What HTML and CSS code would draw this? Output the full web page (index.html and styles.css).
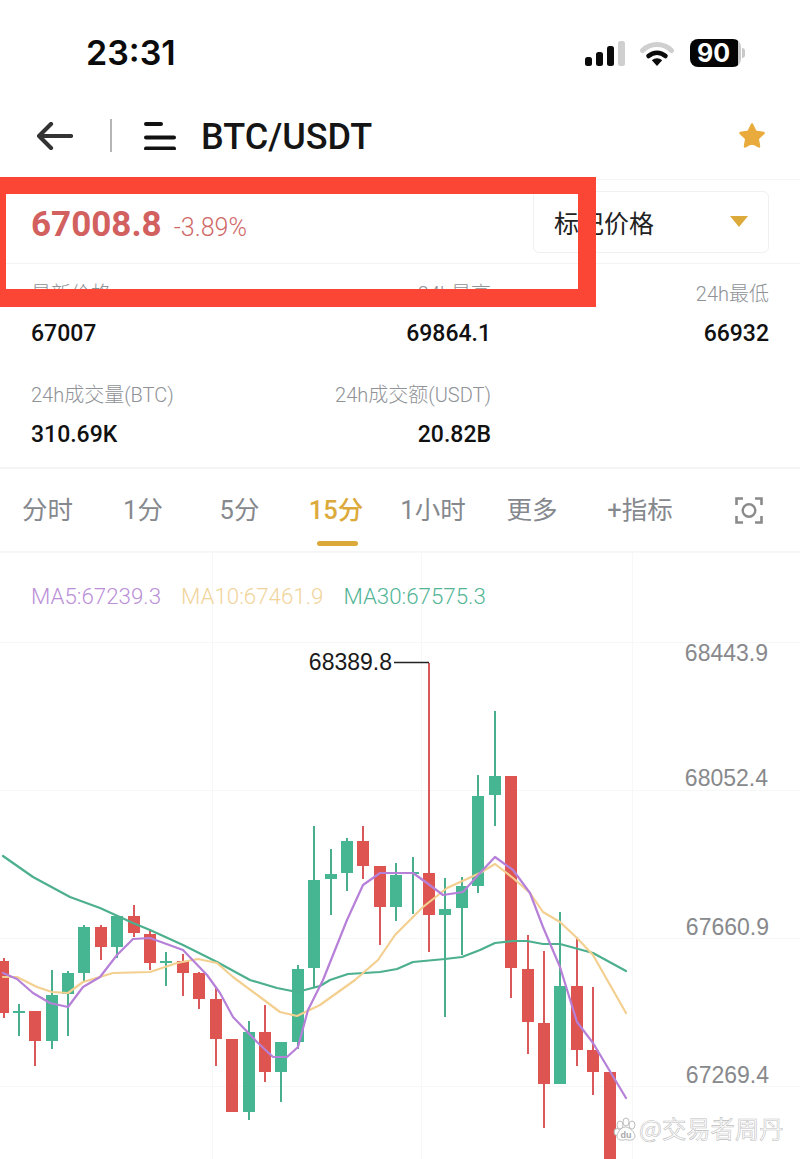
FILE: index.html
```html
<!DOCTYPE html>
<html lang="zh-CN">
<head>
<meta charset="utf-8">
<title>BTC/USDT</title>
<link rel="stylesheet" href="styles.css">
</head>
<body>
<main class="page">
  <div class="status">
    <span class="clock">23:31</span>
    <div class="status-icons">
      <svg class="signal" viewBox="0 0 40 25" width="40" height="25">
        <rect x="0" y="16" width="7" height="9" rx="2.5" fill="#0b0b0b"/>
        <rect x="11" y="11" width="7" height="14" rx="2.5" fill="#0b0b0b"/>
        <rect x="22" y="5" width="7" height="20" rx="2.5" fill="#0b0b0b"/>
        <rect x="33" y="0" width="7" height="25" rx="2.5" fill="#cfcfcf"/>
      </svg>
      <svg class="wifi" viewBox="0 0 34 26" width="34" height="26">
        <path d="M2.5 10.5C10.5 2.6 23.5 2.6 31.5 10.5" fill="none" stroke="#cfcfcf" stroke-width="5" stroke-linecap="round"/>
        <path d="M8.5 16C13.5 11.5 20.5 11.5 25.5 16" fill="none" stroke="#0b0b0b" stroke-width="4.5" stroke-linecap="round"/>
        <path d="M11.8 20.3C15 17.6 19 17.6 22.2 20.3L17 26Z" fill="#0b0b0b"/>
      </svg>
      <div class="battery">
        <span class="battery-level">90</span>
        <span class="battery-tip"></span>
      </div>
    </div>
  </div>

  <header class="topbar">
    <svg class="back" viewBox="0 0 36 28" width="36" height="28">
      <path d="M14 2L2 14L14 26M2 14H34" fill="none" stroke="#333" stroke-width="4.2" stroke-linecap="round" stroke-linejoin="round"/>
    </svg>
    <span class="topbar-rule"></span>
    <svg class="menu" viewBox="0 0 32 28" width="32" height="28">
      <path d="M2 2H17M2 15.500H30M2 26.500H30" fill="none" stroke="#111" stroke-width="4" stroke-linecap="round"/>
    </svg>
    <h1 class="pair">BTC/USDT</h1>
    <svg class="star" viewBox="0 0 28 28" width="28" height="28">
      <path d="M14 2.500L17.500 9.800L25.500 11L19.700 16.500L21 24.500L14 20.700L7 24.500L8.300 16.500L2.500 11L10.500 9.800Z" fill="#e8ab3c" stroke="#e8ab3c" stroke-width="2.500" stroke-linejoin="round"/>
    </svg>
  </header>

  <section class="price-row">
    <div class="price-main">
      <span class="price">67008.8</span>
      <span class="change">-3.89%</span>
    </div>
    <div class="picker">
      <span>标记价格</span>
      <span class="picker-arrow"></span>
    </div>
  </section>

  <section class="stats">
    <div class="stat">
      <div class="stat-label">最新价格</div>
      <div class="stat-value">67007</div>
    </div>
    <div class="stat stat-right">
      <div class="stat-label">24h最高</div>
      <div class="stat-value">69864.1</div>
    </div>
    <div class="stat stat-right">
      <div class="stat-label">24h最低</div>
      <div class="stat-value">66932</div>
    </div>
    <div class="stat">
      <div class="stat-label">24h成交量(BTC)</div>
      <div class="stat-value">310.69K</div>
    </div>
    <div class="stat stat-right">
      <div class="stat-label">24h成交额(USDT)</div>
      <div class="stat-value">20.82B</div>
    </div>
  </section>

  <nav class="tabs">
    <span class="tab">分时</span>
    <span class="tab">1分</span>
    <span class="tab">5分</span>
    <span class="tab tab-active">15分</span>
    <span class="tab">1小时</span>
    <span class="tab">更多</span>
    <span class="tab">+指标</span>
    <span class="tab">
      <svg viewBox="0 0 28 27" width="28" height="27">
        <path d="M1.500 8V1.500H8M20 1.500H26.500V8M1.500 19V25.500H8M20 25.500H26.500V19" fill="none" stroke="#8a8a8a" stroke-width="2.600"/>
        <circle cx="14" cy="13.500" r="6.300" fill="none" stroke="#8a8a8a" stroke-width="2.400"/>
      </svg>
    </span>
  </nav>

  <section class="chart">
    <svg class="chart-canvas" viewBox="0 552 800 607" width="800" height="607">
      <path class="grid-line" d="M0 552.500H800M0 642.500H800M0 790.500H800M0 938.500H800M0 1086.500H800M212.500 552V1159M421.500 552V1159M632.500 552V1159"/>

      <path class="wick wick-green" d="M19 1004V1036M52 970V1049M68 971V1036M84 925V982M117 915V958M166 952V986M249 1021V1120M281 1042V1102M298 965V1049M314 826V987M331 849V915M347 838V891M396 863V921M413 857V914M445 878V1017M462 877V955M478 775V893M495 711V826M560 912V1084"/>
      <path class="body-green" d="M13 1011h12v2h-12zM46 995h12v46h-12zM62 973h12v21h-12zM78 927h12v46h-12zM111 916h12v31h-12zM160 961h12v2h-12zM243 1032h12v80h-12zM275 1042h12v30h-12zM292 969h12v73h-12zM308 880h12v88h-12zM325 874h12v5h-12zM341 841h12v32h-12zM390 875h12v32h-12zM407 872h12v2h-12zM439 909h12v6h-12zM456 886h12v22h-12zM472 796h12v90h-12zM489 776h12v19h-12zM554 986h12v98h-12z"/>

      <path class="wick wick-red" d="M4 958V1018M35 1011V1066M101 925V960M134 905V937M150 930V970M183 954V996M199 972V1009M216 988V1066M265 1005V1082M363 826V879M380 866V945M429 663V952M511 776V998M528 935V1054M544 951V1128M577 937V1066M593 987V1095"/>
      <path class="body-red" d="M-3 961h12v52h-12zM29 1011h12v30h-12zM95 927h12v20h-12zM128 916h12v17h-12zM144 934h12v29h-12zM177 961h12v12h-12zM193 973h12v26h-12zM210 999h12v40h-12zM226 1039h12v73h-12zM259 1032h12v40h-12zM357 841h12v25h-12zM374 866h12v41h-12zM423 873h12v42h-12zM505 776h12v192h-12zM522 969h12v53h-12zM538 1023h12v61h-12zM571 986h12v64h-12zM587 1050h12v22h-12zM604 1072h12v87h-12z"/>

      <polyline class="ma ma30" points="3,856 33,877 70,897 100,908 133,923 150,930 183,945 217,962 250,980 277,988 297,992 320,986 330,980 348,974 380,972 397,969 413,962 445,959 462,957 480,950 495,943 513,941 527,941 543,944 560,944 593,953 626,971"/>
      <polyline class="ma ma10" points="3,977 17,977 37,987 52,992 68,993 83,982 113,973 150,972 177,963 198,959 217,963 233,977 260,997 280,1012 297,1016 320,1005 355,980 378,960 395,935 423,907 447,888 480,873 495,864 513,878 530,893 543,912 560,922 577,938 593,955 626,1013"/>
      <polyline class="ma ma5" points="3,973 17,979 33,993 50,1003 68,1007 83,987 100,977 117,955 133,939 150,938 183,950 207,975 220,993 233,1017 257,1042 273,1057 287,1057 298,1047 308,1010 323,980 347,920 363,885 380,873 413,873 427,883 443,895 463,892 480,873 495,857 513,870 530,893 543,927 560,967 577,1022 593,1043 626,1098"/>

      <path class="high-leader" d="M394 662.500H429"/>
      <text class="high-text" x="392" y="670" text-anchor="end">68389.8</text>

      <text class="axis-text" x="768" y="661" text-anchor="end">68443.9</text>
      <text class="axis-text" x="768" y="786" text-anchor="end">68052.4</text>
      <text class="axis-text" x="769" y="935" text-anchor="end">67660.9</text>
      <text class="axis-text" x="769" y="1083" text-anchor="end">67269.4</text>

      <g class="paw">
        <ellipse cx="620" cy="1125" rx="3" ry="4"/>
        <ellipse cx="626" cy="1122" rx="3" ry="4"/>
        <ellipse cx="632" cy="1125" rx="3" ry="4"/>
        <ellipse cx="617" cy="1132" rx="2.800" ry="3.500"/>
        <path d="M625.500 1127C630 1127 635 1133 635 1136C635 1140 630 1141 625.500 1139.500C621 1141 617 1140 617 1136C617 1133 621 1127 625.500 1127Z"/>
      </g>
      <text class="paw-text" x="626" y="1138" text-anchor="middle">du</text>
      <text class="watermark" x="639" y="1138">@交易者周丹</text>
    </svg>
    <div class="legend">
      <span class="ma-label ma5-label">MA5:67239.3</span>
      <span class="ma-label ma10-label">MA10:67461.9</span>
      <span class="ma-label ma30-label">MA30:67575.3</span>
    </div>
  </section>

  <div class="highlight-box"></div>
</main>
</body>
</html>
```

FILE: styles.css
```css
* {
  box-sizing: border-box;
}

html,
body {
  margin: 0;
  padding: 0;
  background: #fff;
}

body {
  font-family: Roboto, "Noto Sans CJK SC", sans-serif;
  color: #111;
}

.page {
  position: relative;
  width: 800px;
  height: 1159px;
  overflow: hidden;
  background: #fff;
}

/* status bar */
.status {
  height: 100px;
  display: flex;
  align-items: center;
  justify-content: space-between;
  padding: 6px 55px 0 86px;
}

.clock {
  font-family: Inter, Roboto, sans-serif;
  font-size: 34px;
  font-weight: 600;
  line-height: 1;
  color: #0b0b0b;
}

.status-icons {
  display: flex;
  align-items: center;
}

.signal {
  margin-right: 15px;
}

.wifi {
  margin-right: 16px;
}

.battery {
  display: flex;
  align-items: center;
}

.battery-level {
  width: 51px;
  height: 28px;
  border-radius: 8px;
  background: linear-gradient(90deg, #050505 0 94%, #c9c9c9 94% 100%);
  color: #fff;
  font-family: Inter, Roboto, sans-serif;
  font-size: 25px;
  font-weight: 700;
  line-height: 28px;
  padding-left: 7px;
}

.battery-tip {
  width: 3px;
  height: 10px;
  margin-left: 1px;
  border-radius: 0 3px 3px 0;
  background: #c9c9c9;
}

/* top bar */
.topbar {
  height: 80px;
  display: flex;
  align-items: center;
  padding: 0 34px 8px 37px;
  border-bottom: 1px solid #f5f5f5;
}

.topbar-rule {
  width: 2px;
  height: 33px;
  margin-left: 37px;
  background: #b5b5b5;
}

.menu {
  margin-left: 32px;
}

.pair {
  margin: 2px 0 0 25px;
  font-size: 36px;
  font-weight: 500;
  line-height: 1;
  color: #151515;
  flex: 1;
}

/* price row */
.price-row {
  height: 84px;
  display: flex;
  align-items: center;
  justify-content: space-between;
  padding: 0 31px 0 31px;
  border-bottom: 1px solid #f3f3f3;
}

.price-main {
  display: flex;
  align-items: baseline;
  gap: 12px;
  margin-top: 5px;
}

.price {
  font-size: 35px;
  font-weight: 700;
  line-height: 1;
  color: #d2605f;
}

.change {
  font-size: 25px;
  font-weight: 300;
  color: #cf6a69;
}

.picker {
  width: 236px;
  height: 62px;
  display: flex;
  align-items: center;
  justify-content: space-between;
  padding: 0 20px;
  border: 1px solid #f0f0f0;
  border-radius: 6px;
  font-size: 25px;
  color: #222;
}

.picker-arrow {
  width: 0;
  height: 0;
  border-left: 9px solid transparent;
  border-right: 9px solid transparent;
  border-top: 11px solid #dcaa3a;
}

/* statistics */
.stats {
  height: 205px;
  display: grid;
  grid-template-columns: 230px 230px 1fr;
  grid-auto-rows: min-content;
  row-gap: 33px;
  padding: 16px 31px 0;
  border-bottom: 2px solid #f4f4f4;
}

.stat-right {
  text-align: right;
}

.stat-label {
  height: 28px;
  font-size: 20px;
  font-weight: 300;
  line-height: 28px;
  color: #8f9296;
  white-space: nowrap;
}

.stat-value {
  height: 28px;
  margin-top: 12px;
  font-size: 23px;
  font-weight: 500;
  line-height: 28px;
  color: #111;
}

/* interval tabs */
.tabs {
  height: 83px;
  display: grid;
  grid-template-columns: 95px 96px 97px 96px 98px 100px 116px 102px;
  align-items: center;
  border-bottom: 1px solid #f5f5f5;
}

.tab {
  position: relative;
  display: flex;
  justify-content: center;
  font-size: 25.500px;
  line-height: 32px;
  color: #85888d;
}

.tab-active {
  color: #dcaa3a;
  font-weight: 500;
}

.tab-active::after {
  content: "";
  position: absolute;
  left: 29px;
  top: 47px;
  width: 41px;
  height: 5px;
  border-radius: 3px;
  background: #dcaa3a;
}

/* chart */
.chart {
  height: 607px;
  display: grid;
}

.chart-canvas,
.legend {
  grid-area: 1 / 1;
}

.chart-canvas {
  display: block;
}

.grid-line {
  fill: none;
  stroke: #f7f7f7;
  stroke-width: 1;
}

.wick {
  fill: none;
  stroke-width: 2;
}

.wick-green {
  stroke: #49ae8e;
}

.wick-red {
  stroke: #d9585a;
}

.body-green {
  fill: #45b592;
}

.body-red {
  fill: #de5450;
}

.ma {
  fill: none;
  stroke-width: 2.200;
  stroke-linejoin: round;
  stroke-linecap: round;
}

.ma30 {
  stroke: #4caf8e;
}

.ma10 {
  stroke: #f3cf90;
}

.ma5 {
  stroke: #b680d8;
}

.high-leader {
  fill: none;
  stroke: #222;
  stroke-width: 1.500;
}

.high-text,
.axis-text {
  font-family: "Liberation Sans", sans-serif;
  font-size: 23px;
}

.high-text {
  fill: #1a1a1a;
}

.axis-text {
  fill: #88898c;
}

.paw {
  fill: #fff;
  stroke: #bdbdbd;
  stroke-width: 1;
}

.paw-text {
  font-family: "Liberation Sans", sans-serif;
  font-size: 9px;
  font-weight: 700;
  fill: #a8a8a8;
}

.watermark {
  font-family: "Noto Sans CJK SC", sans-serif;
  font-size: 24.300px;
  fill: #fff;
  stroke: #bfbfbf;
  stroke-width: 0.600;
}

.legend {
  display: flex;
  align-items: flex-start;
  gap: 20px;
  padding: 30px 0 0 31px;
}

.ma-label {
  font-size: 22.300px;
  font-weight: 300;
  line-height: 28px;
}

.ma5-label {
  color: #bb8fd8;
}

.ma10-label {
  color: #f1d49b;
}

.ma30-label {
  color: #53b596;
}

/* annotation drawn over the screenshot */
.highlight-box {
  position: absolute;
  left: -12px;
  top: 177px;
  width: 608px;
  height: 130px;
  border-style: solid;
  border-color: #fb4636;
  border-width: 17px 18px 18px 18px;
}
```
